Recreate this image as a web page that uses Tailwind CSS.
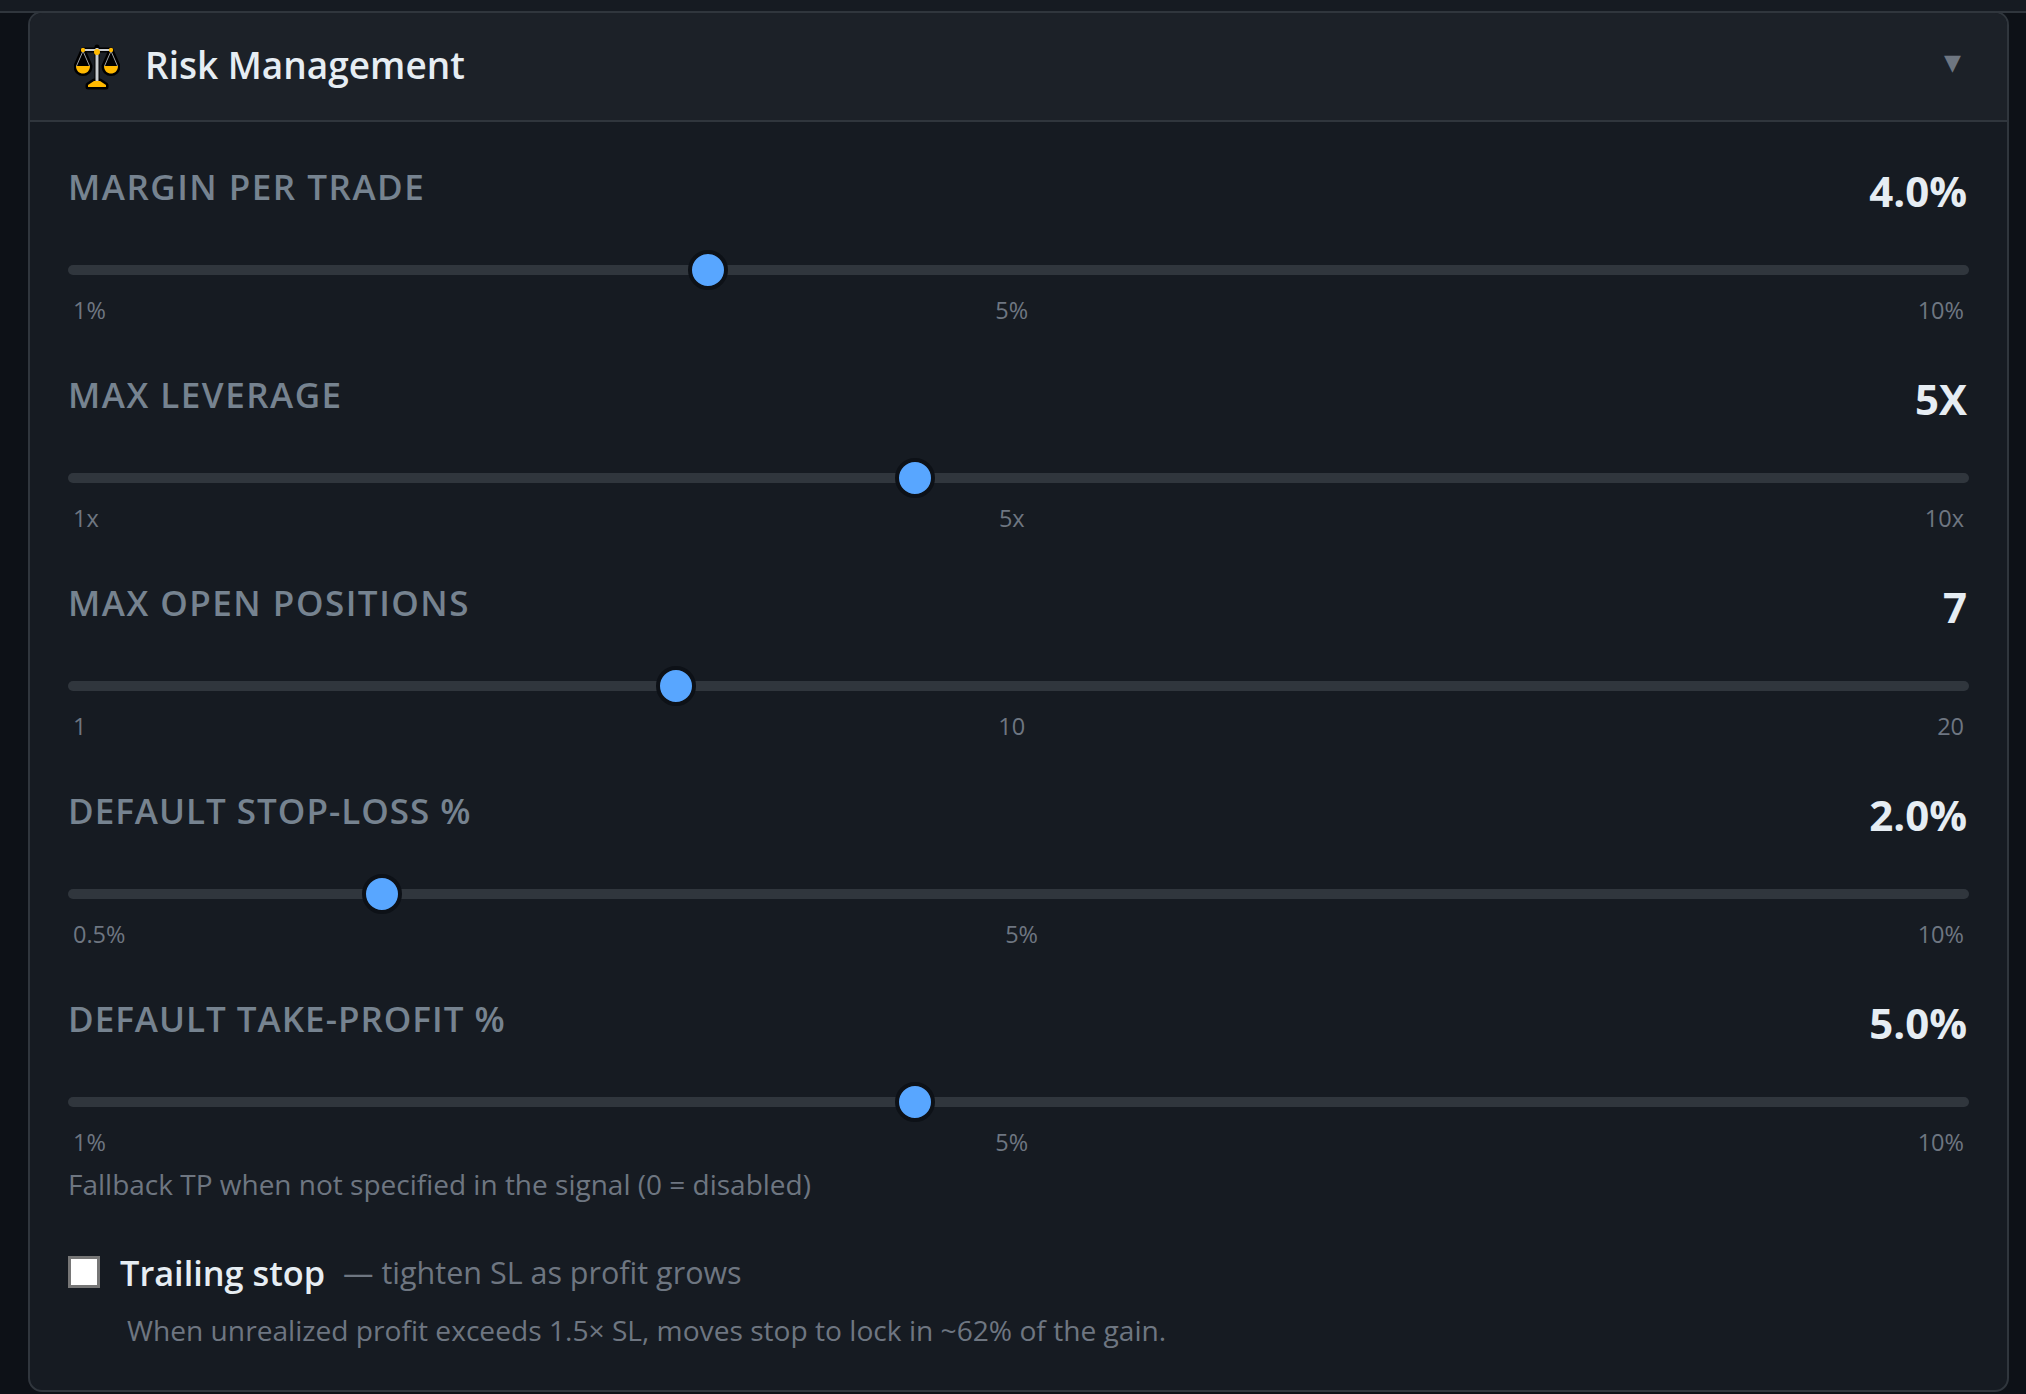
<!DOCTYPE html>
<html>
<head>
<meta charset="utf-8">
<script src="https://cdn.jsdelivr.net/npm/@tailwindcss/browser@4"></script>
</head>
<body class="bg-[#0d1117] font-['Open_Sans',sans-serif] h-[1394px] overflow-hidden">
<div class="h-[13px] bg-[#161b22] border-b-2 border-[#30363d]"></div>
<section class="ml-[28px] w-[1981px] h-[1381px] -mt-[2px] bg-[#161b22] border-2 border-[#30363d] rounded-[14px] overflow-hidden">
  <header class="h-[109px] bg-[#1c2128] border-b-2 border-[#30363d] flex items-center justify-between pl-[44px] pr-[46px]">
    <div class="flex items-center gap-[25px]">
      <svg class="w-[46px] h-[46px]" viewBox="0 0 46 46"><g stroke="#000" stroke-width="5" stroke-linejoin="round" stroke-linecap="round" fill="#000"><path d="M9 6H37M23 3V40M14 43H32V41L26 37H20L14 41Z"/><path d="M9 6L2 22C2 32 16 32 16 22ZM37 6L30 22C30 32 44 32 44 22Z"/></g><path d="M9 6H37" stroke="#c8ccd0" stroke-width="2"/><path d="M23 4V38" stroke="#c8ccd0" stroke-width="3"/><path d="M9 7L2.500 22M9 7L15.500 22M37 7L30.500 22M37 7L43.500 22" stroke="#9a9ea3" stroke-width="1"/><path d="M2 22H16C16 32 2 32 2 22ZM30 22H44C44 32 30 32 30 22Z" fill="#ffb900"/><circle cx="9" cy="6" r="2.200" fill="#ffb900"/><circle cx="37" cy="6" r="2.200" fill="#ffb900"/><circle cx="23" cy="8" r="3" fill="#ffb900"/><path d="M14 43H32V41L26 37H20L14 41Z" fill="#ffb900"/></svg>
      <h2 class="text-[37px] font-semibold leading-none -mt-[4px] text-[#e6edf3]">Risk Management</h2>
    </div>
    <span class="text-[22px] leading-none -mt-[8px] text-[#6e7681] font-['DejaVu_Sans',sans-serif]">▼</span>
  </header>
  <div class="px-[38px] pt-[41px]">
    <div class="h-[208px]">
      <div class="flex justify-between items-start h-[88px]"><span class="text-[35px] leading-[48px] font-semibold tracking-[1.500px] text-[#768390] uppercase">Margin per trade</span><span class="text-[42px] leading-[56px] font-bold pr-[2px] text-[#e6edf3]">4.0%</span></div>
      <input type="range" min="1" max="10" step="0.5" value="4" class="block w-full h-[10px] my-[14px] appearance-none rounded-full bg-[#30363d] [&::-webkit-slider-thumb]:appearance-none [&::-webkit-slider-thumb]:w-[40px] [&::-webkit-slider-thumb]:h-[40px] [&::-webkit-slider-thumb]:rounded-full [&::-webkit-slider-thumb]:bg-[#58a6ff] [&::-webkit-slider-thumb]:border-[4px] [&::-webkit-slider-thumb]:border-[#0d1117]">
      <div class="flex justify-between px-[5px] text-[23.500px] leading-[32px] text-[#6e7681] mt-[19px]"><span>1%</span><span>5%</span><span>10%</span></div>
    </div>
    <div class="h-[208px]">
      <div class="flex justify-between items-start h-[88px]"><span class="text-[35px] leading-[48px] font-semibold tracking-[1.500px] text-[#768390] uppercase">Max leverage</span><span class="text-[42px] leading-[56px] font-bold pr-[2px] text-[#e6edf3]">5X</span></div>
      <input type="range" min="1" max="10" step="1" value="5" class="block w-full h-[10px] my-[14px] appearance-none rounded-full bg-[#30363d] [&::-webkit-slider-thumb]:appearance-none [&::-webkit-slider-thumb]:w-[40px] [&::-webkit-slider-thumb]:h-[40px] [&::-webkit-slider-thumb]:rounded-full [&::-webkit-slider-thumb]:bg-[#58a6ff] [&::-webkit-slider-thumb]:border-[4px] [&::-webkit-slider-thumb]:border-[#0d1117]">
      <div class="flex justify-between px-[5px] text-[23.500px] leading-[32px] text-[#6e7681] mt-[19px]"><span>1x</span><span>5x</span><span>10x</span></div>
    </div>
    <div class="h-[208px]">
      <div class="flex justify-between items-start h-[88px]"><span class="text-[35px] leading-[48px] font-semibold tracking-[1.500px] text-[#768390] uppercase">Max open positions</span><span class="text-[42px] leading-[56px] font-bold pr-[2px] text-[#e6edf3]">7</span></div>
      <input type="range" min="1" max="20" step="1" value="7" class="block w-full h-[10px] my-[14px] appearance-none rounded-full bg-[#30363d] [&::-webkit-slider-thumb]:appearance-none [&::-webkit-slider-thumb]:w-[40px] [&::-webkit-slider-thumb]:h-[40px] [&::-webkit-slider-thumb]:rounded-full [&::-webkit-slider-thumb]:bg-[#58a6ff] [&::-webkit-slider-thumb]:border-[4px] [&::-webkit-slider-thumb]:border-[#0d1117]">
      <div class="flex justify-between px-[5px] text-[23.500px] leading-[32px] text-[#6e7681] mt-[19px]"><span>1</span><span>10</span><span>20</span></div>
    </div>
    <div class="h-[208px]">
      <div class="flex justify-between items-start h-[88px]"><span class="text-[35px] leading-[48px] font-semibold tracking-[1px] text-[#768390] uppercase">Default stop-loss %</span><span class="text-[42px] leading-[56px] font-bold pr-[2px] text-[#e6edf3]">2.0%</span></div>
      <input type="range" min="0.5" max="10" step="0.5" value="2" class="block w-full h-[10px] my-[14px] appearance-none rounded-full bg-[#30363d] [&::-webkit-slider-thumb]:appearance-none [&::-webkit-slider-thumb]:w-[40px] [&::-webkit-slider-thumb]:h-[40px] [&::-webkit-slider-thumb]:rounded-full [&::-webkit-slider-thumb]:bg-[#58a6ff] [&::-webkit-slider-thumb]:border-[4px] [&::-webkit-slider-thumb]:border-[#0d1117]">
      <div class="flex justify-between px-[5px] text-[23.500px] leading-[32px] text-[#6e7681] mt-[19px]"><span>0.5%</span><span>5%</span><span>10%</span></div>
    </div>
    <div>
      <div class="flex justify-between items-start h-[88px]"><span class="text-[35px] leading-[48px] font-semibold tracking-[1px] text-[#768390] uppercase">Default take-profit %</span><span class="text-[42px] leading-[56px] font-bold pr-[2px] text-[#e6edf3]">5.0%</span></div>
      <input type="range" min="1" max="10" step="1" value="5" class="block w-full h-[10px] my-[14px] appearance-none rounded-full bg-[#30363d] [&::-webkit-slider-thumb]:appearance-none [&::-webkit-slider-thumb]:w-[40px] [&::-webkit-slider-thumb]:h-[40px] [&::-webkit-slider-thumb]:rounded-full [&::-webkit-slider-thumb]:bg-[#58a6ff] [&::-webkit-slider-thumb]:border-[4px] [&::-webkit-slider-thumb]:border-[#0d1117]">
      <div class="flex justify-between px-[5px] text-[23.500px] leading-[32px] text-[#6e7681] mt-[19px]"><span>1%</span><span>5%</span><span>10%</span></div>
      <p class="mt-[6px] text-[28px] leading-[40px] text-[#6e7681]">Fallback TP when not specified in the signal (0 = disabled)</p>
    </div>
    <label class="flex items-center mt-[47px] h-[44px]">
      <span class="w-[32px] h-[32px] bg-white border-[3px] border-[#767676] -mt-[3px]"></span>
      <span class="ml-[20px] text-[34.300px] font-semibold text-[#e6edf3]">Trailing stop</span>
      <span class="ml-[18px] text-[30.500px] text-[#6e7681]">— tighten SL as profit grows</span>
    </label>
    <p class="mt-[15px] ml-[59px] text-[28.150px] leading-[40px] text-[#6e7681]">When unrealized profit exceeds 1.5× SL, moves stop to lock in ~62% of the gain.</p>
  </div>
</section>
</body>
</html>
